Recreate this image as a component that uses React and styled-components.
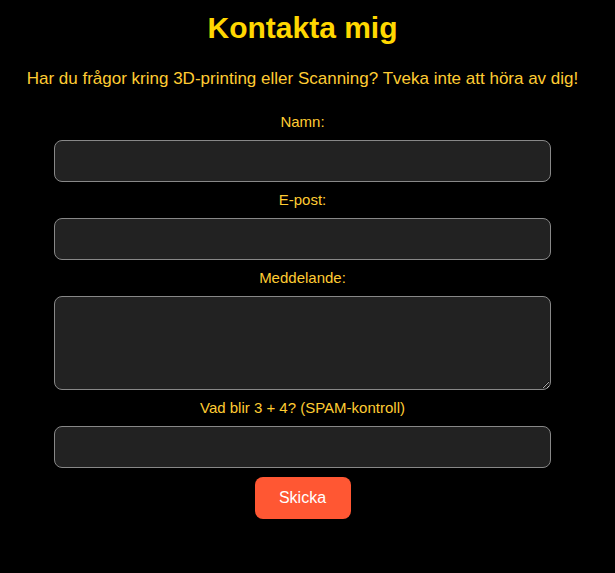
import styled, { createGlobalStyle } from "styled-components";

const GlobalStyle = createGlobalStyle`
  body {
    margin: 0;
    background: #000;
    font-family: "Liberation Sans", Arial, sans-serif;
  }
`;

const Section = styled.section`
  width: 605px;
  padding-top: 9px;
  text-align: center;
  color: #ffcc33;
`;

const Title = styled.h1`
  margin: 0;
  font-size: 30px;
  line-height: 38px;
  font-weight: bold;
  color: #ffd700;
`;

const Intro = styled.p`
  margin: 22px 0 0;
  font-size: 17px;
  line-height: 20px;
`;

const Form = styled.form`
  width: 497px;
  margin: 24px auto 0;
  display: flex;
  flex-direction: column;
  align-items: center;
`;

const Label = styled.label`
  display: block;
  margin: ${({ $first }) => ($first ? "0 0 9px" : "9px 0")};
  font-size: 15px;
  line-height: 18px;
  color: #ffcc33;
`;

const Field = styled.input`
  box-sizing: border-box;
  width: 100%;
  height: 42px;
  padding: 8px 10px;
  background: #222;
  border: 1px solid #888;
  border-radius: 8px;
  color: #fff;
  font-size: 15px;
  font-family: inherit;
`;

const Area = styled.textarea`
  box-sizing: border-box;
  width: 100%;
  height: 94px;
  padding: 8px 10px;
  background: #222;
  border: 1px solid #888;
  border-radius: 8px;
  color: #fff;
  font-size: 15px;
  font-family: inherit;
  display: block;
`;

const Button = styled.button`
  margin-top: 9px;
  width: 96px;
  height: 42px;
  background: #ff5733;
  border: none;
  border-radius: 8px;
  color: #fff;
  font-size: 16px;
  font-family: inherit;
`;

const App = () => {
  return (
    <>
      <GlobalStyle />
      <Section>
        <Title>Kontakta mig</Title>
        <Intro>
          Har du frågor kring 3D-printing eller Scanning? Tveka inte att höra av dig!
        </Intro>
        <Form onSubmit={(e) => e.preventDefault()}>
          <Label $first>Namn:</Label>
          <Field type="text" />
          <Label>E-post:</Label>
          <Field type="email" />
          <Label>Meddelande:</Label>
          <Area />
          <Label>Vad blir 3 + 4? (SPAM-kontroll)</Label>
          <Field type="text" />
          <Button type="submit">Skicka</Button>
        </Form>
      </Section>
    </>
  );
};

export default App;
